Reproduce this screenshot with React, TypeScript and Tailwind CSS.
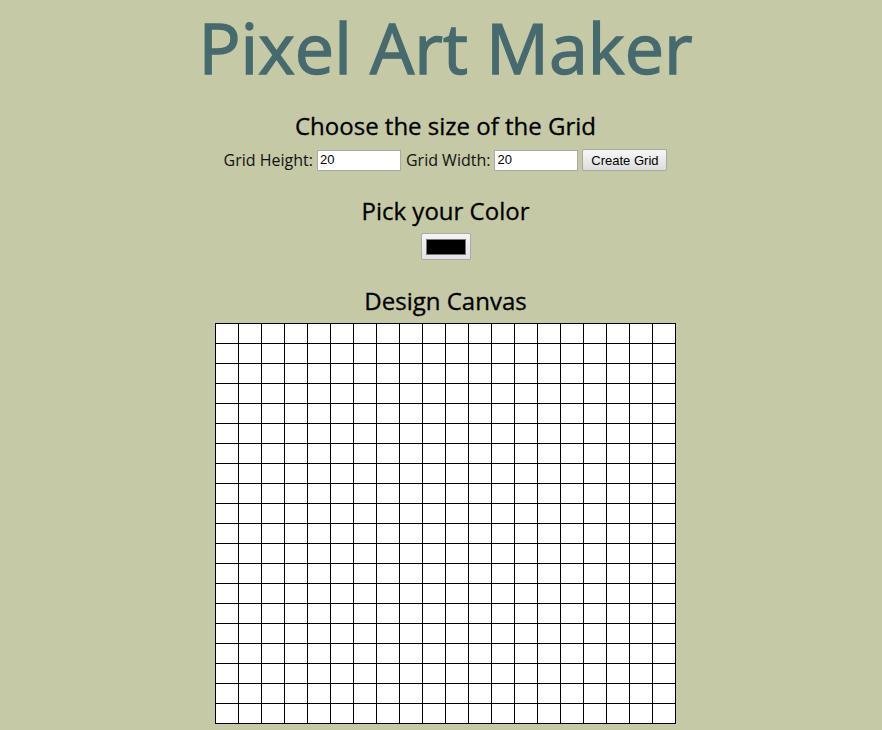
import { useState } from "react";

const ROWS = 20;
const COLS = 20;

const App = () => {
  const [height, setHeight] = useState("20");
  const [width, setWidth] = useState("20");
  const [cells, setCells] = useState<Record<string, boolean>>({});

  const paint = (key: string) => setCells({ ...cells, [key]: !cells[key] });

  return (
    <div className="min-h-[730px] bg-[#c5c9a5] pl-[9px] flex flex-col items-center text-black font-['Open_Sans',sans-serif]">
      <h1 className="mt-[7px] text-[70px] leading-[80px] text-[#476a6f] [-webkit-text-stroke:1.4px_#476a6f]">
        Pixel Art Maker
      </h1>

      <h2 className="mt-[23px] text-[24px] leading-[32px] [-webkit-text-stroke:0.3px_#000]">
        Choose the size of the Grid
      </h2>
      <form
        className="mt-[7px] flex items-center gap-[4px] text-[16px] leading-[22px] text-[#111]"
        onSubmit={(e) => e.preventDefault()}
      >
        <span>Grid Height:</span>
        <input
          type="text"
          value={height}
          onChange={(e) => setHeight(e.target.value)}
          className="w-[84px] h-[21px] border border-[#a9a9a9] bg-white pl-[2px] text-[13px] text-black font-['Liberation_Sans',Arial,sans-serif] outline-none"
        />
        <span className="ml-[1px]">Grid Width:</span>
        <input
          type="text"
          value={width}
          onChange={(e) => setWidth(e.target.value)}
          className="w-[84px] h-[21px] border border-[#a9a9a9] bg-white pl-[2px] text-[13px] text-black font-['Liberation_Sans',Arial,sans-serif] outline-none"
        />
        <button
          type="submit"
          className="w-[85px] h-[22px] border border-[#a6a6a6] rounded-[2px] bg-gradient-to-b from-[#f7f7f7] to-[#dddddd] text-[13px] text-black font-['Liberation_Sans',Arial,sans-serif]"
        >
          Create Grid
        </button>
      </form>

      <h2 className="mt-[24px] text-[24px] leading-[32px] [-webkit-text-stroke:0.3px_#000]">
        Pick your Color
      </h2>
      <div className="mt-[6px] w-[50px] h-[27px] border border-[#a9a9a9] rounded-[2px] bg-gradient-to-b from-[#f4f4f4] to-[#e4e4e4] flex items-center justify-center">
        <div className="w-[40px] h-[16px] bg-black border border-[#777777]" />
      </div>

      <h2 className="mt-[25px] text-[24px] leading-[32px] [-webkit-text-stroke:0.3px_#000]">
        Design Canvas
      </h2>
      <div className="mt-[6px] grid grid-cols-[repeat(20,23px)] border-l border-t border-black">
        {Array.from({ length: ROWS * COLS }).map((_, i) => (
          <div
            key={i}
            onClick={() => paint(String(i))}
            className={`h-[20px] border-r border-b border-black ${
              cells[String(i)] ? "bg-black" : "bg-white"
            }`}
          />
        ))}
      </div>
    </div>
  );
};

export default App;
